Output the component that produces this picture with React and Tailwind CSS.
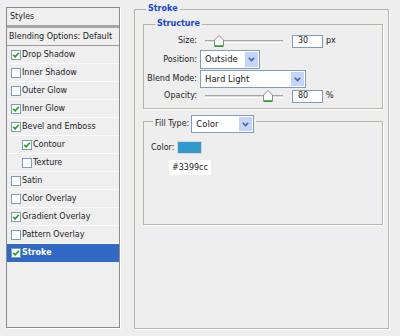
const ROWS = [
  { label: 'Drop Shadow', on: true },
  { label: 'Inner Shadow', on: false },
  { label: 'Outer Glow', on: false },
  { label: 'Inner Glow', on: true },
  { label: 'Bevel and Emboss', on: true },
  { label: 'Contour', on: true, sub: true },
  { label: 'Texture', on: false, sub: true },
  { label: 'Satin', on: false },
  { label: 'Color Overlay', on: false },
  { label: 'Gradient Overlay', on: true },
  { label: 'Pattern Overlay', on: false },
  { label: 'Stroke', on: true, selected: true },
]

function Check({ on }) {
  return (
    <span className="w-[10px] h-[10px] border border-[#7f9db9] bg-white flex items-center justify-center shrink-0">
      {on && (
        <svg width="8" height="8" viewBox="0 0 8 8">
          <path d="M1.2 3.8 L3.2 5.8 L6.8 1.8" stroke="#21a121" strokeWidth="1.7" fill="none" />
        </svg>
      )}
    </span>
  )
}

function Slider({ at }) {
  return (
    <div className="relative w-[78px] h-[14px] flex items-center">
      <div className="w-full h-[3px] border-t border-[#a5a5a5] border-b border-b-white bg-[#dcdcdc]" />
      <svg className="absolute top-[1px]" style={{ left: at - 4 }} width="10" height="12" viewBox="0 0 10 12">
        <path d="M0.5 5 L5 0.5 L9.5 5 L9.5 11.5 L0.5 11.5 Z" fill="#fbfbfb" stroke="#8c8c8c" />
        <path d="M1 11 L9 11" stroke="#21a121" strokeWidth="1.5" />
      </svg>
    </div>
  )
}

function Select({ value, w, h }) {
  return (
    <div className={`flex items-center bg-white border border-[#7f9db9] ${w} ${h}`}>
      <span className="flex-1 pl-[4px] text-[8.5px]">{value}</span>
      <span className="w-[15px] h-full border border-white bg-[#c4d5fa] flex items-center justify-center rounded-[1px]">
        <svg width="7" height="5" viewBox="0 0 7 5">
          <path d="M0.8 0.8 L3.5 3.6 L6.2 0.8" stroke="#4d6185" strokeWidth="1.5" fill="none" />
        </svg>
      </span>
    </div>
  )
}

function NumBox({ value }) {
  return (
    <div className="w-[31px] h-[13px] border border-[#7f9db9] bg-white pl-[5px] flex items-center text-[8px]">
      {value}
    </div>
  )
}

export default function App() {
  return (
    <div className="w-[400px] h-[336px] bg-[#eeeeee] flex items-start font-['DejaVu_Sans',sans-serif] text-[8px] text-[#222]">
      {/* styles list */}
      <div className="ml-[6px] mt-[7px] w-[114px] h-[321px] border border-[#8a8a8a] shadow-[1px_1px_0_#fff] bg-[#efefef] flex flex-col">
        <div className="h-[20px] flex items-center pl-[3px] border-b-[3px] border-[#a5a5a5]">Styles</div>
        <div className="h-[18px] flex items-center pl-[2px] border-b border-[#9a9a9a]">Blending Options: Default</div>
        {ROWS.map((r) => (
          <div
            key={r.label}
            className={`h-[18px] flex items-center gap-[1px] border-b ${r.sub ? 'pl-[15px]' : 'pl-[4px]'} ${
              r.selected ? 'bg-[#316ac5] text-white font-bold border-[#316ac5]' : 'border-[#fbfbfb]'
            }`}
          >
            <Check on={r.on} />
            <span>{r.label}</span>
          </div>
        ))}
      </div>

      {/* stroke group */}
      <div className="relative ml-[14px] mt-[9px] w-[255px] h-[320px] border border-[#b5b5a6] shadow-[1px_1px_0_#fff] flex flex-col">
        <span className="absolute left-[11px] top-[-7px] px-[2px] bg-[#eeeeee] font-bold text-[#1846d2]">Stroke</span>

        <div className="relative ml-[8px] mt-[14px] w-[240px] h-[85px] border border-[#b5b5a6] shadow-[1px_1px_0_#fff] flex flex-col">
          <span className="absolute left-[11px] top-[-7px] px-[2px] bg-[#eeeeee] font-bold text-[#1846d2]">Structure</span>

          <div className="mt-[9px] h-[14px] flex items-center">
            <span className="w-[53px] text-right">Size:</span>
            <div className="ml-[8px]"><Slider at={13} /></div>
            <div className="ml-[9px]"><NumBox value="30" /></div>
            <span className="ml-[3px]">px</span>
          </div>
          <div className="mt-[2px] h-[19px] flex items-center">
            <span className="w-[53px] text-right">Position:</span>
            <div className="ml-[3px]"><Select value="Outside" w="w-[60px]" h="h-[19px]" /></div>
          </div>
          <div className="mt-[1px] h-[18px] flex items-center">
            <span className="w-[53px] text-right">Blend Mode:</span>
            <div className="ml-[3px]"><Select value="Hard Light" w="w-[106px]" h="h-[18px]" /></div>
          </div>
          <div className="mt-[1px] h-[14px] flex items-center">
            <span className="w-[53px] text-right">Opacity:</span>
            <div className="ml-[8px]"><Slider at={62} /></div>
            <div className="ml-[9px]"><NumBox value="80" /></div>
            <span className="ml-[3px]">%</span>
          </div>
        </div>

        <div className="relative ml-[8px] mt-[12px] w-[240px] h-[104px] border border-[#b5b5a6] shadow-[1px_1px_0_#fff] flex flex-col">
          <div className="absolute left-[9px] top-[-7px] px-[2px] bg-[#eeeeee] flex items-center gap-[2px]">
            <span>Fill Type:</span>
            <Select value="Color" w="w-[63px]" h="h-[18px]" />
          </div>

          <div className="mt-[19px] pl-[7px] flex items-center gap-[3px]">
            <span>Color:</span>
            <span className="w-[25px] h-[13px] bg-[#3399cc] border border-[#d8d8d8]" />
          </div>
          <div className="mt-[6px] ml-[25px] w-[42px] h-[15px] bg-white pl-[3px] flex items-center">#3399cc</div>
        </div>
      </div>
    </div>
  )
}
